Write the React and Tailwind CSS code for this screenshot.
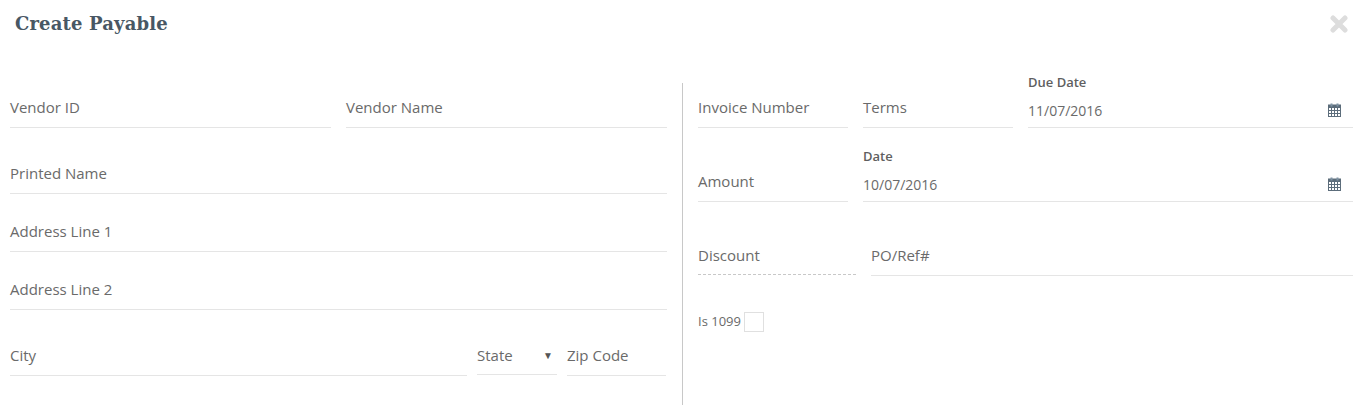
import React from "react";

function Field({ label, className = "", dashed = false }) {
  return (
    <div className={`h-[45px] flex items-end leading-[22px] text-[15px] ${dashed ? "pb-[8px] border-b border-dashed border-[#c8c8c8]" : "pb-[9px] border-b border-[#e5e5e5]"} ${className}`}>
      {label}
    </div>
  );
}

function CalendarIcon({ className = "" }) {
  return (
    <svg className={className} width="13" height="14" viewBox="0 0 13 14" fill="none">
      <rect x="0.5" y="2" width="12" height="11.5" fill="none" stroke="#5c6d7b" />
      <rect x="0.5" y="2" width="12" height="3" fill="#5c6d7b" />
      <rect x="2.5" y="0.5" width="2" height="3" fill="#7f93a3" />
      <rect x="8.5" y="0.5" width="2" height="3" fill="#7f93a3" />
      <path d="M3.5 5v8M6.5 5v8M9.5 5v8M1 7.5h11M1 10.5h11" stroke="#5c6d7b" strokeWidth="1" />
    </svg>
  );
}

function DateField({ label, value, className = "" }) {
  return (
    <div className={`relative h-[45px] border-b border-[#e5e5e5] ${className}`}>
      <div className="absolute left-0 top-[-9px] text-[13px] leading-[16px] font-semibold text-[#5f5f5f]">{label}</div>
      <div className="absolute left-0 top-[17px] text-[14px] leading-[22px]">{value}</div>
      <CalendarIcon className="absolute right-[12px] top-[20px]" />
    </div>
  );
}

export default function App() {
  return (
    <div className="w-[1362px] h-[413px] bg-white overflow-hidden text-[#6a6a6a] font-['Open_Sans',sans-serif]">
      <div className="h-[83px] flex items-start justify-between pl-[15px] pr-[14px]">
        <h1 className="mt-[12px] text-[18px] leading-[23px] tracking-[0.15px] font-bold text-[#485764] font-['DejaVu_Serif',serif]">Create Payable</h1>
        <svg className="mt-[15px]" width="18" height="18" viewBox="0 0 18 18" fill="none">
          <path d="M3 3L15 15M15 3L3 15" stroke="#dddddd" strokeWidth="5" strokeLinecap="round" />
        </svg>
      </div>
      <div className="flex pl-[10px]">
        <div className="w-[657px]">
          <div className="flex gap-[15px]">
            <Field label="Vendor ID" className="w-[321px]" />
            <Field label="Vendor Name" className="w-[321px]" />
          </div>
          <Field label="Printed Name" className="mt-[21px]" />
          <Field label="Address Line 1" className="mt-[13px]" />
          <Field label="Address Line 2" className="mt-[13px]" />
          <div className="flex mt-[21px]">
            <Field label="City" className="w-[457px]" />
            <div className="w-[80px] ml-[10px] h-[44px] flex items-end justify-between pb-[8px] pr-[4px] leading-[22px] text-[15px] border-b border-[#e5e5e5]">
              <span>State</span>
              <span className="text-[10px] text-[#555]">▼</span>
            </div>
            <Field label="Zip Code" className="w-[99px] ml-[10px]" />
          </div>
        </div>
        <div className="w-px h-[322px] ml-[15px] bg-[#c8c8c8]" />
        <div className="w-[655px] ml-[15px]">
          <div className="flex gap-[15px]">
            <Field label="Invoice Number" className="w-[150px]" />
            <Field label="Terms" className="w-[150px]" />
            <DateField label="Due Date" value="11/07/2016" className="flex-1" />
          </div>
          <div className="flex gap-[15px] mt-[29px]">
            <Field label="Amount" className="w-[150px]" />
            <DateField label="Date" value="10/07/2016" className="flex-1" />
          </div>
          <div className="flex gap-[15px] mt-[28px]">
            <Field label="Discount" dashed className="w-[158px]" />
            <Field label="PO/Ref#" className="flex-1 !h-[46px]" />
          </div>
          <div className="flex items-center mt-[36px] gap-[3px] text-[13px]">
            <span>Is 1099</span>
            <span className="w-[20px] h-[20px] border border-[#e0e0e0] bg-white" />
          </div>
        </div>
      </div>
    </div>
  );
}
